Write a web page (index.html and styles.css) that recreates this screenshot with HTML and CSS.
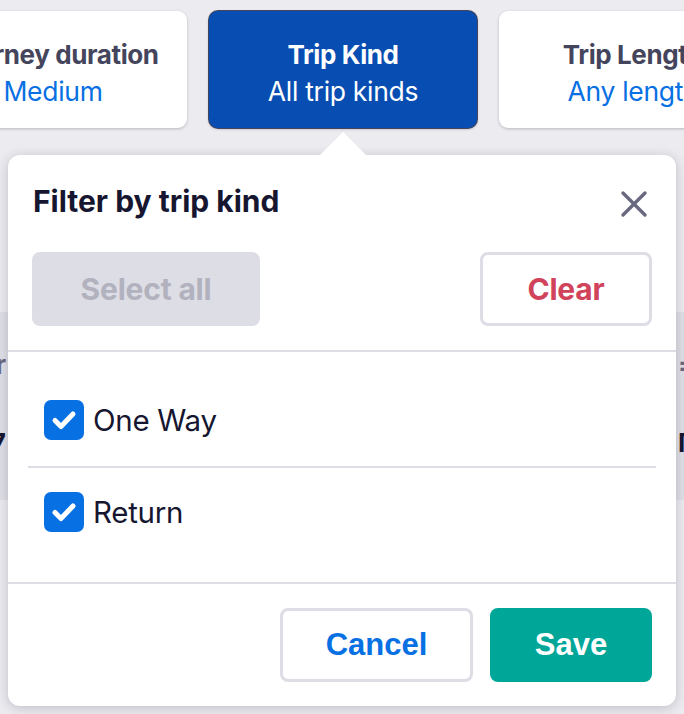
FILE: index.html
```html
<!DOCTYPE html>
<html lang="en">
<head>
<meta charset="utf-8">
<title>Filter by trip kind</title>
<link rel="stylesheet" href="styles.css">
</head>
<body>
<div class="page">
  <div class="cards">
    <div class="card">
      <div class="card-title">Journey duration</div>
      <div class="card-value">Medium</div>
    </div>
    <div class="card card-active">
      <div class="card-title">Trip Kind</div>
      <div class="card-value">All trip kinds</div>
    </div>
    <div class="card">
      <div class="card-title">Trip Length</div>
      <div class="card-value">Any length</div>
    </div>
  </div>

  <div class="band">
    <div class="band-col band-left">
      <span class="band-head">Carrier</span>
      <span class="band-num">17</span>
    </div>
    <div class="band-col band-right">
      <span class="band-head">=</span>
      <span class="band-num">Γ</span>
    </div>
  </div>

  <div class="popover">
    <div class="arrow"></div>
    <div class="pop-header">
      <h2 class="pop-title">Filter by trip kind</h2>
      <button class="close" aria-label="Close">
        <svg width="28" height="28" viewBox="0 0 28 28"><path d="M3 3 L25 25 M25 3 L3 25" stroke="#68697f" stroke-width="3.4" stroke-linecap="round"/></svg>
      </button>
    </div>
    <div class="pop-actions">
      <button class="btn btn-disabled">Select all</button>
      <button class="btn btn-outline btn-clear">Clear</button>
    </div>
    <div class="options">
      <label class="option">
        <span class="check"><svg width="40" height="40" viewBox="0 0 40 40"><path d="M11 20.5 L17 26.5 L29 14" fill="none" stroke="#fff" stroke-width="5" stroke-linecap="round" stroke-linejoin="round"/></svg></span>
        <span class="option-label">One Way</span>
      </label>
      <label class="option">
        <span class="check"><svg width="40" height="40" viewBox="0 0 40 40"><path d="M11 20.5 L17 26.5 L29 14" fill="none" stroke="#fff" stroke-width="5" stroke-linecap="round" stroke-linejoin="round"/></svg></span>
        <span class="option-label">Return</span>
      </label>
    </div>
    <div class="pop-footer">
      <button class="btn btn-outline btn-cancel">Cancel</button>
      <button class="btn btn-save">Save</button>
    </div>
  </div>
</div>
</body>
</html>
```

FILE: styles.css
```css
* { box-sizing: border-box; }
html, body { margin: 0; padding: 0; }
body {
  background: #ebebf0;
  font-family: Inter, "Noto Sans", sans-serif;
  width: 684px;
  height: 714px;
  overflow: hidden;
}
.page {
  position: relative;
  width: 684px;
  height: 714px;
  overflow: hidden;
}
.cards {
  display: flex;
  gap: 22px;
  margin-left: -81px;
  padding-top: 11px;
}
.card {
  flex: 0 0 268px;
  height: 117px;
  background: #fff;
  border-radius: 9px;
  box-shadow: 0 1px 3px rgba(37, 32, 51, 0.25);
  display: flex;
  flex-direction: column;
  align-items: center;
  justify-content: center;
  padding-top: 7px;
  white-space: nowrap;
}
.card-title {
  font-size: 26px;
  font-weight: 700;
  line-height: 36px;
  color: #44455c;
  letter-spacing: -0.4px;
}
.card-value {
  font-size: 26.5px;
  line-height: 36px;
  color: #0770e3;
  letter-spacing: -0.3px;
}
.card-active {
  background: #084eb2;
  box-shadow: 0 0 0 1px #45465c, 0 1px 3px rgba(37, 32, 51, 0.3);
}
.card-active .card-title,
.card-active .card-value { color: #fff; }

.band {
  margin-top: 184px;
  height: 188px;
  background: #dfdfe6;
  display: flex;
  justify-content: space-between;
}
.band-col {
  display: flex;
  flex-direction: column;
  gap: 48px;
  padding-top: 38px;
  font-weight: 700;
  font-size: 26px;
  line-height: 30px;
}
.band-left { align-items: flex-end; margin-left: -100px; width: 106px; overflow: hidden; }
.band-right { align-items: flex-start; margin-right: -60px; width: 68px; padding-left: 2px; }
.band-head { color: #68697f; }
.band-num { color: #161630; }

.popover {
  position: absolute;
  left: 8px;
  top: 155px;
  width: 668px;
  height: 551px;
  background: #fff;
  border-radius: 12px;
  box-shadow: 0 2px 12px rgba(37, 32, 51, 0.22);
  padding-top: 25px;
}
.arrow {
  position: absolute;
  top: -23px;
  left: 311px;
  width: 0;
  height: 0;
  border-left: 24px solid transparent;
  border-right: 24px solid transparent;
  border-bottom: 24px solid #fff;
}
.pop-header {
  height: 42px;
  display: flex;
  align-items: center;
  justify-content: space-between;
  padding: 0 28px 0 25px;
  margin-bottom: 30px;
}
.pop-title {
  margin: 0;
  font-size: 30px;
  font-weight: 700;
  color: #161630;
  letter-spacing: 0;
}
.close {
  border: 0;
  background: none;
  padding: 0;
  width: 28px;
  height: 28px;
  margin-top: 6px;
  display: block;
}
.close svg { display: block; }
.pop-actions {
  height: 74px;
  display: flex;
  justify-content: space-between;
  padding: 0 24px;
  margin-bottom: 24px;
}
.btn {
  font-family: Inter, "Noto Sans", sans-serif;
  font-size: 30px;
  font-weight: 700;
  border-radius: 8px;
  border: 0;
  height: 74px;
  letter-spacing: -0.2px;
}
.btn-disabled {
  width: 228px;
  background: #dddde5;
  color: #b2b2bf;
}
.btn-outline {
  background: #fff;
  border: 3px solid #dddde5;
}
.btn-clear {
  width: 172px;
  color: #d1435b;
}
.options {
  border-top: 2px solid #dddde5;
  border-bottom: 2px solid #dddde5;
  padding: 24px 20px 26px;
}
.option {
  display: flex;
  align-items: center;
  gap: 9px;
  padding: 24px 16px 26px;
}
.option + .option {
  border-top: 2px solid #dddde5;
  padding-bottom: 24px;
}
.check {
  width: 40px;
  height: 40px;
  border-radius: 7px;
  background: #0770e3;
  display: block;
}
.check svg { display: block; }
.option-label {
  font-size: 29.5px;
  color: #161630;
  letter-spacing: -0.3px;
}
.pop-footer {
  display: flex;
  justify-content: flex-end;
  gap: 17px;
  padding: 24px 24px 0;
}
.btn-cancel,
.btn-save {
  font-family: "Liberation Sans", Arial, sans-serif;
  font-size: 31px;
  letter-spacing: 0;
}
.btn-cancel {
  width: 193px;
  color: #0770e3;
}
.btn-save {
  width: 162px;
  background: #00a698;
  color: #fff;
}
```
